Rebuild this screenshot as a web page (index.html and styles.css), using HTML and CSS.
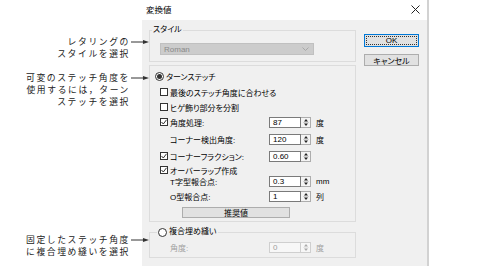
FILE: index.html
```html
<!DOCTYPE html>
<html>
<head>
    <meta charset="utf-8">
    <title>変換値</title>
    <link rel="stylesheet" href="styles.css">
</head>
<body>
    <div class="page">
        <div class="notes">
            <div class="note note-style">
                <div class="note-text">
                    <div class="note-line">レタリングの</div>
                    <div class="note-line">スタイルを選択</div>
                </div>
                <svg class="arrow" width="18" height="12" viewBox="0 0 18 12"><line x1="0" y1="6" x2="13" y2="6" stroke="#333" stroke-width="1"/><polygon points="12,4 18,6 12,8" fill="#333"/></svg>
            </div>
            <div class="note note-turn">
                <div class="note-text">
                    <div class="note-line">可変のステッチ角度を</div>
                    <div class="note-line">使用するには，ターン</div>
                    <div class="note-line">ステッチを選択</div>
                </div>
                <svg class="arrow" width="18" height="12" viewBox="0 0 18 12"><line x1="0" y1="6" x2="13" y2="6" stroke="#333" stroke-width="1"/><polygon points="12,4 18,6 12,8" fill="#333"/></svg>
            </div>
            <div class="note note-fill">
                <div class="note-text">
                    <div class="note-line">固定したステッチ角度</div>
                    <div class="note-line">に複合埋め縫いを選択</div>
                </div>
                <svg class="arrow" width="18" height="12" viewBox="0 0 18 12"><line x1="0" y1="6" x2="13" y2="6" stroke="#333" stroke-width="1"/><polygon points="12,4 18,6 12,8" fill="#333"/></svg>
            </div>
        </div>

        <div class="dialog">
            <div class="titlebar">
                <span class="title">変換値</span>
                <svg class="close" width="9" height="9" viewBox="0 0 9 9"><path d="M0.5 0.5 L8.5 8.5 M8.5 0.5 L0.5 8.5" stroke="#222" stroke-width="1"/></svg>
            </div>
            <div class="dialog-body">
                <div class="groups">
                    <fieldset class="group style-group">
                        <legend>スタイル</legend>
                        <div class="combo">
                            <span>Roman</span>
                            <svg width="7" height="4" viewBox="0 0 7 4"><path d="M0.5 0.5 L3.5 3.5 L6.5 0.5" fill="none" stroke="#a8a8a8" stroke-width="1"/></svg>
                        </div>
                    </fieldset>

                    <div class="group turn-group">
                        <div class="row radio-row"><span class="radio on"></span>ターンステッチ</div>
                        <div class="row gap-4"><span class="check"></span>最後のステッチ角度に合わせる</div>
                        <div class="row"><span class="check"></span>ヒゲ飾り部分を分割</div>
                        <div class="row">
                            <span class="label"><span class="check on"><svg width="6" height="6" viewBox="0 0 6 6"><path d="M0.5 3 L2.3 5 L5.5 0.8" fill="none" stroke="#333" stroke-width="1"/></svg></span>角度処理:</span>
                            <span class="spin"><span class="spin-field">87</span><span class="spin-btn"><svg width="6" height="9" viewBox="0 0 6 9"><path d="M3 1 L5 3.5 H1 Z M3 8 L5 5.5 H1 Z" fill="#222"/><line x1="0" y1="4.5" x2="6" y2="4.5" stroke="#bbb" stroke-width="0.6"/></svg></span></span>
                            <span class="unit">度</span>
                        </div>
                        <div class="row gap-5">
                            <span class="label indent">コーナー検出角度:</span>
                            <span class="spin"><span class="spin-field">120</span><span class="spin-btn"><svg width="6" height="9" viewBox="0 0 6 9"><path d="M3 1 L5 3.5 H1 Z M3 8 L5 5.5 H1 Z" fill="#222"/><line x1="0" y1="4.5" x2="6" y2="4.5" stroke="#bbb" stroke-width="0.6"/></svg></span></span>
                            <span class="unit">度</span>
                        </div>
                        <div class="row gap-5">
                            <span class="label"><span class="check on"><svg width="6" height="6" viewBox="0 0 6 6"><path d="M0.5 3 L2.3 5 L5.5 0.8" fill="none" stroke="#333" stroke-width="1"/></svg></span>コーナーフラクション:</span>
                            <span class="spin"><span class="spin-field">0.60</span><span class="spin-btn"><svg width="6" height="9" viewBox="0 0 6 9"><path d="M3 1 L5 3.5 H1 Z M3 8 L5 5.5 H1 Z" fill="#222"/><line x1="0" y1="4.5" x2="6" y2="4.5" stroke="#bbb" stroke-width="0.6"/></svg></span></span>
                        </div>
                        <div class="row gap-2"><span class="check on"><svg width="6" height="6" viewBox="0 0 6 6"><path d="M0.5 3 L2.3 5 L5.5 0.8" fill="none" stroke="#333" stroke-width="1"/></svg></span>オーバーラップ作成</div>
                        <div class="row short gap-0">
                            <span class="label indent">T字型報合点:</span>
                            <span class="spin"><span class="spin-field">0.3</span><span class="spin-btn"><svg width="6" height="9" viewBox="0 0 6 9"><path d="M3 1 L5 3.5 H1 Z M3 8 L5 5.5 H1 Z" fill="#222"/><line x1="0" y1="4.5" x2="6" y2="4.5" stroke="#bbb" stroke-width="0.6"/></svg></span></span>
                            <span class="unit">mm</span>
                        </div>
                        <div class="row short gap-4">
                            <span class="label indent">O型報合点:</span>
                            <span class="spin"><span class="spin-field">1</span><span class="spin-btn"><svg width="6" height="9" viewBox="0 0 6 9"><path d="M3 1 L5 3.5 H1 Z M3 8 L5 5.5 H1 Z" fill="#222"/><line x1="0" y1="4.5" x2="6" y2="4.5" stroke="#bbb" stroke-width="0.6"/></svg></span></span>
                            <span class="unit">列</span>
                        </div>
                        <div class="btn btn-default">推奨値</div>
                    </div>

                    <fieldset class="group fill-group">
                        <legend><span class="radio"></span>複合埋め縫い</legend>
                        <div class="row disabled">
                            <span class="label indent">角度:</span>
                            <span class="spin"><span class="spin-field">0</span><span class="spin-btn"><svg width="6" height="9" viewBox="0 0 6 9"><path d="M3 1 L5 3.5 H1 Z M3 8 L5 5.5 H1 Z" fill="#aaa"/><line x1="0" y1="4.5" x2="6" y2="4.5" stroke="#ddd" stroke-width="0.6"/></svg></span></span>
                            <span class="unit">度</span>
                        </div>
                    </fieldset>
                </div>

                <div class="buttons">
                    <div class="btn btn-ok">OK</div>
                    <div class="btn">キャンセル</div>
                </div>
            </div>
        </div>
    </div>
</body>
</html>
```

FILE: styles.css
```css
body {
    margin: 0;
    background: white;
    color: #000;
    font-family: "Liberation Sans", "Noto Sans CJK JP", sans-serif;
}
.page {
    display: flex;
    align-items: flex-start;
}

/* callouts on the left */
.notes {
    width: 142px;
    flex: none;
    position: relative;
    z-index: 1;
    font-family: "Noto Sans CJK JP", sans-serif;
    font-size: 8.8px;
    letter-spacing: 1.6px;
    color: #222;
}
.note {
    display: flex;
    justify-content: flex-end;
    align-items: flex-start;
    margin-right: -7px;
}
.note-text {
    text-align: right;
    white-space: nowrap;
    margin-right: -1px;
}
.note-line {
    height: 12px;
    line-height: 12px;
}
.arrow {
    flex: none;
    margin-left: 2px;
}
.note-style { margin-top: 36px; }
.note-turn { margin-top: 12px; }
.note-fill { margin-top: 126px; }

/* dialog */
.dialog {
    width: 285px;
    flex: none;
    border-right: 2px solid #d2d2d2;
    font-size: 8px;
    font-feature-settings: "palt";
}
.titlebar {
    height: 20px;
    background: white;
    display: flex;
    align-items: center;
    justify-content: space-between;
    padding: 0 6px 2px 4px;
    box-sizing: border-box;
}
.title {
    font-size: 8.5px;
}
.close {
    margin-right: 1px;
}
.dialog-body {
    height: 246px;
    background: #f0f0f0;
    display: flex;
    padding: 5px 0 0 7px;
    box-sizing: border-box;
}
.groups {
    width: 207px;
    flex: none;
}
.group {
    border: 1px solid #dcdcdc;
    margin: 0;
    min-width: 0;
}
fieldset.group {
    padding: 0 10px 6px 10px;
}
legend {
    padding: 0 1px;
    margin-left: -8px;
    line-height: 10px;
    display: flex;
    align-items: center;
}

.combo {
    margin-top: 8px;
    width: 154px;
    height: 12px;
    box-sizing: border-box;
    background: #cccccc;
    border: 1px solid #c0c0c0;
    color: #8a8a8a;
    display: flex;
    align-items: center;
    justify-content: space-between;
    padding: 0 4px 0 3px;
}

.turn-group {
    margin-top: 3px;
    padding: 4px 0 3px 10px;
}
.fill-group {
    margin-top: 4px;
}
.fill-group legend {
    line-height: 12px;
    margin-left: -3px;
}
.fill-group .row {
    margin-top: 3px;
}
fieldset.fill-group {
    padding-bottom: 4px;
}

.row {
    display: flex;
    align-items: center;
    height: 12px;
    margin-top: 3px;
    white-space: nowrap;
}
.row.short { height: 11px; }
.row.gap-0 { margin-top: 0; }
.row.gap-2 { margin-top: 2px; }
.row.gap-4 { margin-top: 4px; }
.row.gap-5 { margin-top: 5px; }
.radio-row {
    margin-top: 0;
    margin-left: -5px;
}
.disabled { color: #a0a0a0; }

.radio {
    width: 9px;
    height: 9px;
    box-sizing: border-box;
    border: 1px solid #333;
    border-radius: 50%;
    background: white;
    margin-right: 2px;
    flex: none;
    display: inline-flex;
    align-items: center;
    justify-content: center;
}
.radio.on::after {
    content: "";
    width: 5px;
    height: 5px;
    border-radius: 50%;
    background: #333;
}
.check {
    width: 8px;
    height: 8px;
    box-sizing: border-box;
    border: 1px solid #333;
    background: white;
    margin-right: 2px;
    flex: none;
    display: inline-flex;
    align-items: center;
    justify-content: center;
}

.label {
    width: 109px;
    flex: none;
    display: flex;
    align-items: center;
}
.label.indent { padding-left: 10px; box-sizing: border-box; }

.spin {
    display: flex;
    width: 42px;
    height: 11px;
    flex: none;
}
.spin-field {
    width: 32px;
    box-sizing: border-box;
    border: 1px solid #7a7a7a;
    background: white;
    padding-left: 3px;
    line-height: 9px;
}
.spin-btn {
    width: 10px;
    box-sizing: border-box;
    border: 1px solid #adadad;
    border-left: none;
    background: #f4f4f4;
    display: flex;
    align-items: center;
    justify-content: center;
}
.disabled .spin-field,
.disabled .spin-btn {
    border-color: #cfcfcf;
    background: #f7f7f7;
}
.unit {
    margin-left: 5px;
}

.btn {
    height: 12px;
    box-sizing: border-box;
    background: #e1e1e1;
    border: 1px solid #adadad;
    display: flex;
    align-items: center;
    justify-content: center;
}
.btn-default {
    width: 108px;
    height: 11px;
    margin: 5px 0 0 22px;
}
.buttons {
    width: 55px;
    margin: 9px 0 0 8px;
    flex: none;
}
.btn-ok {
    height: 13px;
    border: 1px solid #0078d7;
    outline: 1px dotted #333;
    outline-offset: -3px;
    margin-bottom: 7px;
}
```
